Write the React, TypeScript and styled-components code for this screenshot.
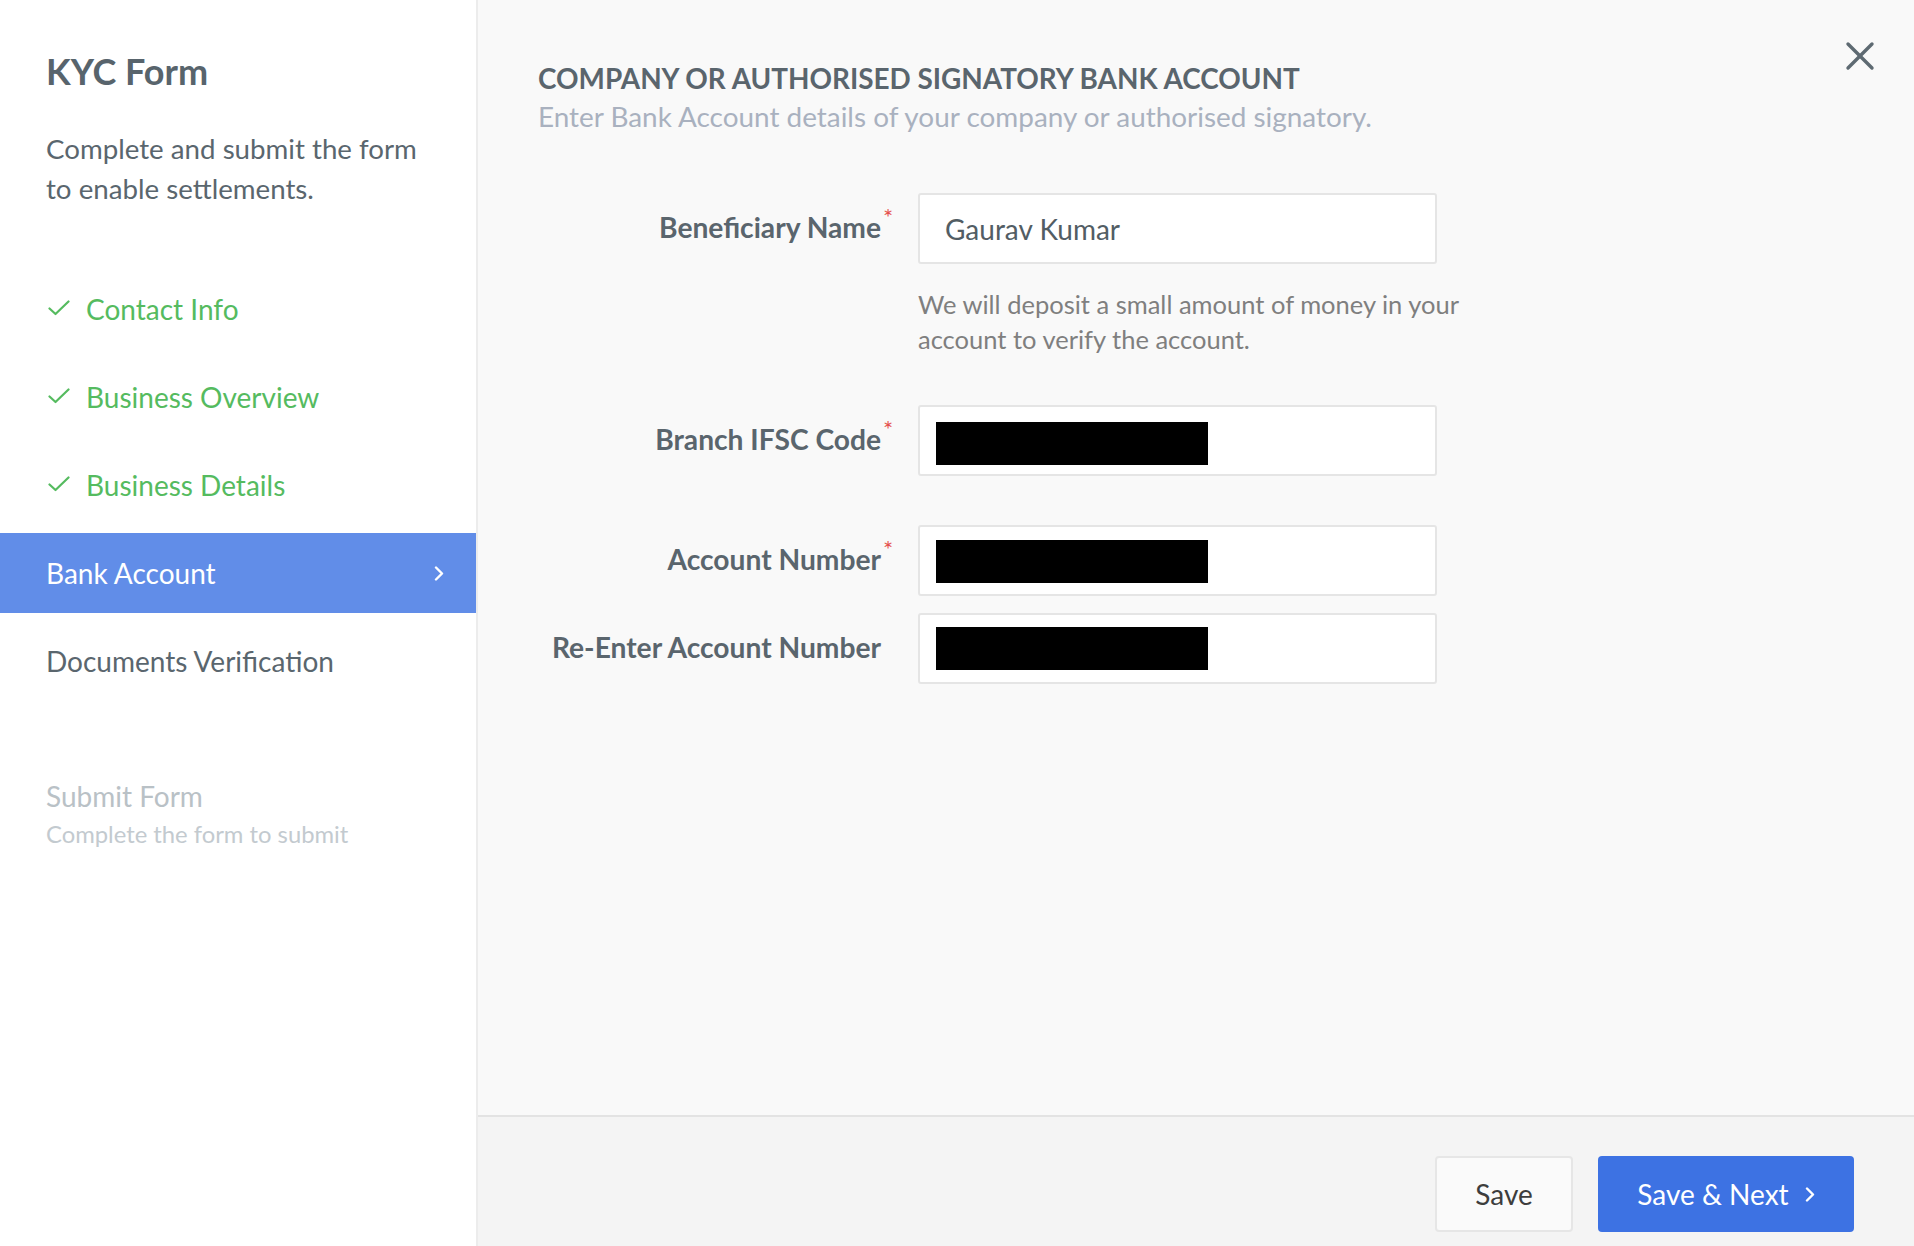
import * as React from "react"
import styled, { createGlobalStyle } from "styled-components"

const GlobalStyle = createGlobalStyle`
  html, body {
    margin: 0;
    padding: 0;
    background: #ffffff;
  }
  * {
    box-sizing: border-box;
  }
  body {
    font-family: Lato, "Open Sans", sans-serif;
  }
`

type Step = {
  label: string
  state: "done" | "active" | "todo"
}

const steps: Step[] = [
  { label: "Contact Info", state: "done" },
  { label: "Business Overview", state: "done" },
  { label: "Business Details", state: "done" },
  { label: "Bank Account", state: "active" },
  { label: "Documents Verification", state: "todo" },
]

function Check() {
  return (
    <svg width="22" height="16" viewBox="0 0 22 16" fill="none">
      <polyline
        points="1.5,8.5 7.5,14 20.5,1.5"
        stroke="#55bb5f"
        strokeWidth="2.2"
        strokeLinecap="round"
        strokeLinejoin="round"
      />
    </svg>
  )
}

function Chevron({ color = "#fff" }: { color?: string }) {
  return (
    <svg width="10" height="15" viewBox="0 0 10 15" fill="none">
      <polyline
        points="2,1.5 8,7.5 2,13.5"
        stroke={color}
        strokeWidth="2.4"
        strokeLinecap="round"
        strokeLinejoin="round"
      />
    </svg>
  )
}

function CloseIcon() {
  return (
    <svg width="30" height="30" viewBox="0 0 30 30" fill="none">
      <line x1="3" y1="3" x2="27" y2="27" stroke="#5e6a72" strokeWidth="3.4" strokeLinecap="round" />
      <line x1="27" y1="3" x2="3" y2="27" stroke="#5e6a72" strokeWidth="3.4" strokeLinecap="round" />
    </svg>
  )
}

function App() {
  return (
    <Page>
      <GlobalStyle />
      <Sidebar>
        <Title>KYC Form</Title>
        <Intro>Complete and submit the form to enable settlements.</Intro>
        <StepList>
          {steps.map((s) => (
            <StepItem key={s.label} $state={s.state}>
              {s.state === "done" && (
                <CheckBox>
                  <Check />
                </CheckBox>
              )}
              <StepText>{s.label}</StepText>
              {s.state === "active" && <Chevron />}
            </StepItem>
          ))}
        </StepList>
        <SubmitBlock>
          <SubmitTitle>Submit Form</SubmitTitle>
          <SubmitHint>Complete the form to submit</SubmitHint>
        </SubmitBlock>
      </Sidebar>

      <Main>
        <Content>
          <CloseButton>
            <CloseIcon />
          </CloseButton>
          <Heading>COMPANY OR AUTHORISED SIGNATORY BANK ACCOUNT</Heading>
          <SubHeading>Enter Bank Account details of your company or authorised signatory.</SubHeading>

          <Form>
            <Row $top={59}>
              <Label>
                Beneficiary Name<Required>*</Required>
              </Label>
              <Field>
                <FieldText>Gaurav Kumar</FieldText>
              </Field>
            </Row>
            <Helper>
              We will deposit a small amount of money in your account to verify the account.
            </Helper>
            <Row $top={48}>
              <Label>
                Branch IFSC Code<Required>*</Required>
              </Label>
              <Field>
                <Redacted $shift={5} />
              </Field>
            </Row>
            <Row $top={49}>
              <Label>
                Account Number<Required>*</Required>
              </Label>
              <Field>
                <Redacted $shift={2} />
              </Field>
            </Row>
            <Row $top={17}>
              <Label>Re-Enter Account Number</Label>
              <Field>
                <Redacted $shift={0} />
              </Field>
            </Row>
          </Form>
        </Content>

        <Footer>
          <SaveButton>Save</SaveButton>
          <NextButton>
            Save &amp; Next
            <Chevron />
          </NextButton>
        </Footer>
      </Main>
    </Page>
  )
}

const Page = styled.div`
  display: flex;
  width: 1914px;
  height: 1246px;
  overflow: hidden;
`

const Sidebar = styled.div`
  width: 478px;
  flex-shrink: 0;
  background: #ffffff;
  border-right: 2px solid #ececec;
  padding-top: 49px;
  display: flex;
  flex-direction: column;
`

const Title = styled.h1`
  margin: 0;
  padding-left: 46px;
  font-size: 36px;
  line-height: 44px;
  font-weight: 700;
  color: #58646c;
`

const Intro = styled.p`
  margin: 36px 0 0;
  padding: 0 46px;
  font-size: 27.7px;
  line-height: 40px;
  font-weight: 400;
  color: #5a666e;
`

const StepList = styled.div`
  margin-top: 60px;
  display: flex;
  flex-direction: column;
  gap: 8px;
`

const StepItem = styled.div<{ $state: Step["state"] }>`
  height: 80px;
  display: flex;
  align-items: center;
  padding: 0 32px 0 46px;
  font-size: 28px;
  background: ${(p) => (p.$state === "active" ? "#618de8" : "transparent")};
  color: ${(p) =>
    p.$state === "done" ? "#55bb5f" : p.$state === "active" ? "#ffffff" : "#5a666e"};
  padding-left: ${(p) => (p.$state === "done" ? "48px" : "46px")};
`

const CheckBox = styled.span`
  display: flex;
  width: 38px;
  margin-top: -2px;
`

const StepText = styled.span`
  flex: 1;
`

const SubmitBlock = styled.div`
  margin-top: 77px;
  padding-left: 46px;
`

const SubmitTitle = styled.div`
  font-size: 28px;
  line-height: 36px;
  color: #b9c1c6;
`

const SubmitHint = styled.div`
  margin-top: 3px;
  font-size: 23.8px;
  line-height: 34px;
  color: #c3cacf;
`

const Main = styled.div`
  flex: 1;
  display: flex;
  flex-direction: column;
  background: #f9f9f9;
`

const Content = styled.div`
  position: relative;
  flex: 1;
  padding: 60px 60px 0 60px;
`

const CloseButton = styled.div`
  position: absolute;
  top: 41px;
  right: 39px;
  display: flex;
`

const Heading = styled.h2`
  margin: 0;
  font-size: 27.9px;
  line-height: 36px;
  font-weight: 700;
  color: #5a656d;
`

const SubHeading = styled.p`
  margin: 2px 0 0;
  font-size: 27.9px;
  line-height: 36px;
  color: #a9b1bf;
`

const Form = styled.div`
  display: flex;
  flex-direction: column;
`

const Row = styled.div<{ $top: number }>`
  display: grid;
  grid-template-columns: 343px 519px;
  column-gap: 37px;
  align-items: center;
  margin-top: ${(p) => p.$top}px;
`

const Label = styled.div`
  position: relative;
  justify-self: end;
  margin-top: -3px;
  font-size: 28.2px;
  font-weight: 700;
  color: #5a656d;
  white-space: nowrap;
`

const Required = styled.span`
  position: absolute;
  left: 100%;
  top: -8px;
  margin-left: 2px;
  font-size: 24px;
  color: #e5524f;
  font-weight: 400;
`

const Field = styled.div`
  height: 71px;
  background: #ffffff;
  border: 2px solid #e5e5e5;
  border-radius: 3px;
  display: flex;
  align-items: center;
  padding-left: 16px;
`

const FieldText = styled.span`
  padding-left: 9px;
  font-size: 28px;
  color: #525d64;
`

const Redacted = styled.div<{ $shift: number }>`
  width: 272px;
  height: 43px;
  margin-top: ${(p) => p.$shift}px;
  background: #000000;
`

const Helper = styled.p`
  margin: 23px 0 0 380px;
  width: 560px;
  font-size: 25.5px;
  line-height: 35px;
  color: #7f7f7f;
`

const Footer = styled.div`
  height: 131px;
  flex-shrink: 0;
  background: #f4f4f4;
  border-top: 2px solid #e3e3e3;
  display: flex;
  justify-content: flex-end;
  align-items: flex-start;
  gap: 25px;
  padding: 39px 60px 0 0;
`

const SaveButton = styled.button`
  width: 138px;
  height: 76px;
  background: #fafafa;
  border: 2px solid #e6e6e6;
  border-radius: 4px;
  font-family: Lato, sans-serif;
  font-size: 28px;
  color: #3d3d3d;
  cursor: pointer;
`

const NextButton = styled.button`
  width: 256px;
  height: 76px;
  background: #3d72e3;
  border: none;
  border-radius: 4px;
  font-family: Lato, sans-serif;
  font-size: 28px;
  color: #ffffff;
  display: flex;
  align-items: center;
  justify-content: center;
  gap: 16px;
  padding-left: 6px;
  cursor: pointer;
`

export default App
